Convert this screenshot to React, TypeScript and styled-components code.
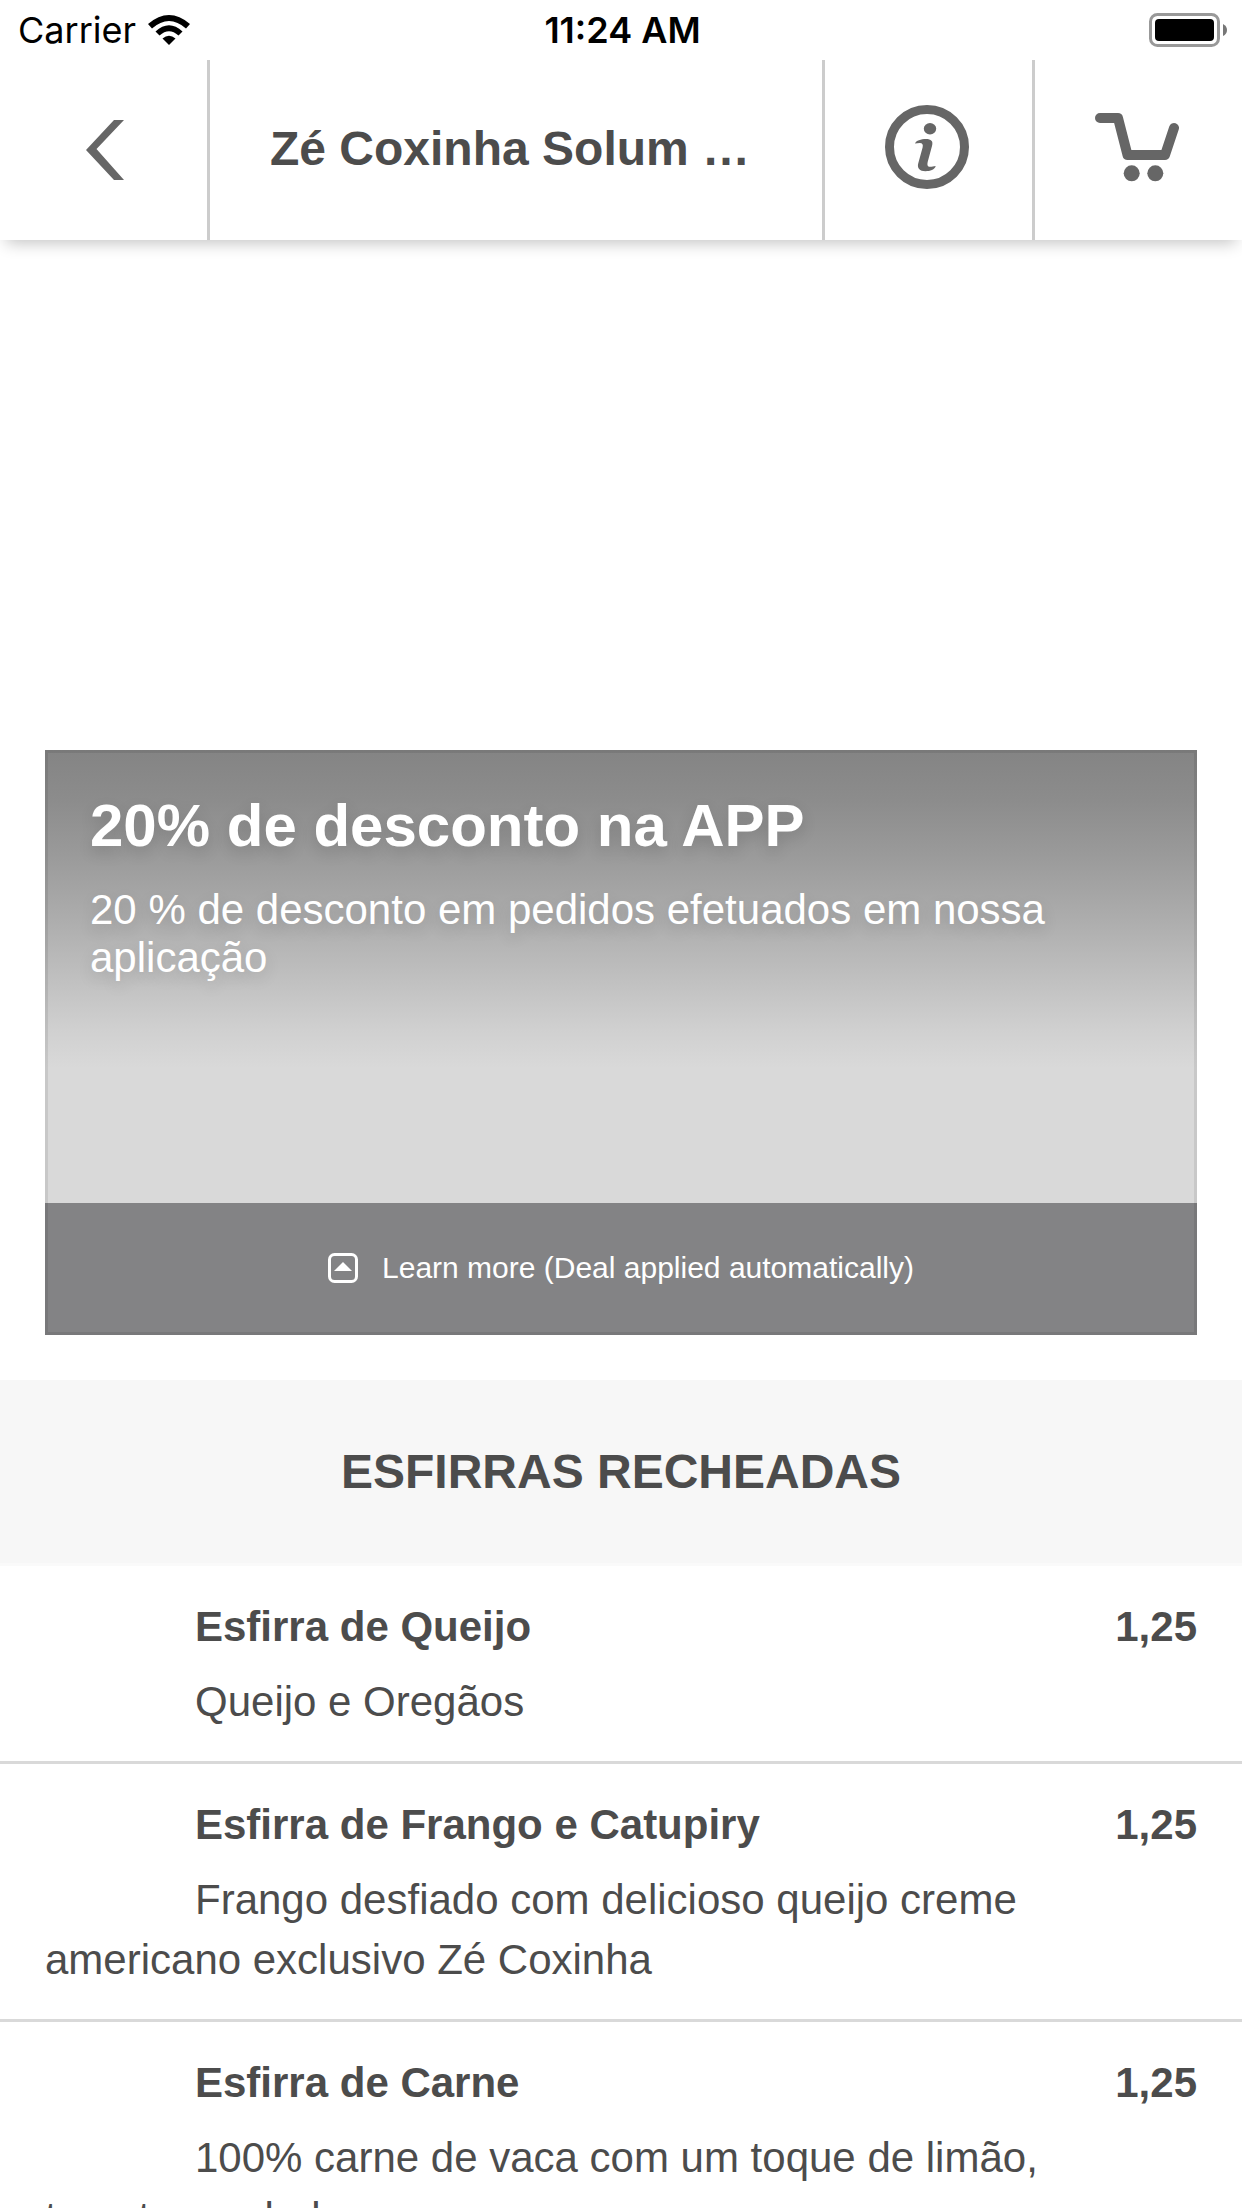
import React from "react";
import styled, { createGlobalStyle } from "styled-components";

const GlobalStyle = createGlobalStyle`
  *, *::before, *::after { box-sizing: border-box; }
  body {
    margin: 0;
    background: #fff;
    color: #4c4c4c;
    font-family: "Liberation Sans", Arial, Helvetica, sans-serif;
  }
  h1, h2, h3, p, ul { margin: 0; padding: 0; }
  button { border: 0; padding: 0; background: none; color: inherit; font: inherit; cursor: pointer; }
  svg { display: block; flex: none; }
`;

const Screen = styled.div`
  height: 100vh;
  display: flex;
  flex-direction: column;
  overflow: hidden;
  background: #fff;
`;

const TopBar = styled.header`
  flex: none;
  background: #fff;
  box-shadow: 0 9px 15px -6px rgba(0, 0, 0, 0.24);
`;

const StatusBar = styled.div`
  display: grid;
  grid-template-columns: 1fr auto 1fr;
  align-items: center;
  height: 60px;
  padding: 0 15px 0 18px;
  color: #000;
  font-family: Inter, Roboto, sans-serif;
  font-size: 36px;
  line-height: 45px;
`;

const Carrier = styled.div`
  display: flex;
  align-items: center;
  gap: 12px;
`;

const Clock = styled.time`
  font-weight: 600;
`;

const Battery = styled.div`
  justify-self: end;
`;

const NavBar = styled.nav`
  display: flex;
  height: 180px;
`;

const NavButton = styled.button<{ $divider: "left" | "right" }>`
  flex: none;
  display: flex;
  align-items: center;
  justify-content: center;
  width: 210px;
  color: #666;
  box-shadow: inset ${(p) => (p.$divider === "left" ? "3px" : "-3px")} 0 0 #ccc;
`;

const IconButton = styled(NavButton)`
  padding-bottom: 6px;
`;

const NavTitle = styled.h1`
  flex: 1;
  min-width: 0;
  padding: 0 60px;
  overflow: hidden;
  text-overflow: ellipsis;
  white-space: nowrap;
  font-size: 48px;
  line-height: 177px;
`;

const Content = styled.main`
  flex: 1;
  min-height: 0;
  overflow: hidden;
`;

const Cover = styled.div`
  height: 510px;
`;

const Deal = styled.section`
  position: relative;
  margin: 0 45px 45px;
  color: #fff;

  &::after {
    content: "";
    position: absolute;
    inset: 0;
    border: 3px solid rgba(0, 0, 0, 0.08);
    pointer-events: none;
  }
`;

const DealBody = styled.div`
  display: flex;
  flex-direction: column;
  gap: 30px;
  min-height: 453px;
  padding: 46px 45px 45px;
  background: linear-gradient(
    #848484 0,
    #8c8c8c 50px,
    #9a9a9a 105px,
    #adadad 170px,
    #bdbdbd 220px,
    #d0d0d0 280px,
    #d9d9d9 318px
  );
  text-shadow: 0 6px 15px rgba(0, 0, 0, 0.15);
`;

const DealTitle = styled.h2`
  font-size: 60px;
  line-height: 60px;
`;

const DealText = styled.p`
  font-size: 42px;
  line-height: 48px;
`;

const DealButton = styled.button`
  display: flex;
  align-items: center;
  justify-content: center;
  gap: 24px;
  width: 100%;
  height: 132px;
  padding-bottom: 2px;
  background: #838385;
  font-size: 30px;
  line-height: 36px;
`;

const SectionTitle = styled.h2`
  padding: 62px 45px 61px;
  border-bottom: 3px solid #fafafa;
  background: #f7f7f7;
  font-size: 48px;
  line-height: 60px;
  text-align: center;
  text-transform: uppercase;
`;

const Menu = styled.ul`
  list-style: none;
`;

const Item = styled.li`
  padding: 31px 45px 29px;
  border-bottom: 3px solid #d9d9d9;
`;

const Thumb = styled.div`
  float: left;
  width: 120px;
  height: 120px;
  margin-right: 30px;
`;

const ItemHead = styled.div`
  display: flex;
  justify-content: space-between;
  margin-bottom: 15px;
  font-size: 42px;
  font-weight: bold;
  line-height: 60px;
`;

const ItemName = styled.h3`
  font-size: inherit;
`;

const ItemText = styled.p`
  padding-right: 90px;
  font-size: 42px;
  line-height: 60px;
`;

const WifiIcon = () => (
  <svg width="42" height="30" viewBox="0 0 42 30" aria-hidden="true">
    <path d="M0 9Q21-9 42 9L38 13.500Q21-1.500 4 13.500Z" />
    <path d="M7.500 16.500Q21 4 34.500 16.500L30.500 20.500Q21 12 11.500 20.500Z" />
    <path d="M14.500 23.500Q21 18 27.500 23.500L21 30Z" />
  </svg>
);

const BatteryIcon = () => (
  <svg width="78" height="34" viewBox="0 0 78 34" role="img" aria-label="Battery full">
    <rect x="1.500" y="1.500" width="68" height="31" rx="7" fill="none" stroke="#999" strokeWidth="3" />
    <rect x="6" y="6" width="59" height="22" rx="4" />
    <path d="M74 11Q78 13 78 17T74 23Z" fill="#777" />
  </svg>
);

const BackIcon = () => (
  <svg width="38" height="60" viewBox="0 0 38 60" fill="currentColor" aria-hidden="true">
    <path d="M28 0H38L10.500 29L38 60H28L0 30Z" />
  </svg>
);

const InfoIcon = () => (
  <svg width="84" height="84" viewBox="0 0 84 84" fill="currentColor" aria-hidden="true">
    <circle cx="42" cy="42" r="37.500" fill="none" stroke="currentColor" strokeWidth="9" />
    <ellipse cx="45" cy="23.700" rx="6.200" ry="5.700" />
    <path d="M30 38.500C31 35.500 36 34 41 34C46 34 48.500 36 47 41L42.800 56.500C42 60 42.500 61.800 45 61.800C47 61.800 48.500 61.500 50.700 61C50 64.500 45 66.200 40.500 66.200C34.500 66.200 32 63 33.200 58.500L37.600 42.500C38.300 39.500 37.500 38 34.800 38C33 38 31.500 38.200 30 38.500Z" />
  </svg>
);

const CartIcon = () => (
  <svg width="84" height="84" viewBox="0 0 84 84" aria-hidden="true">
    <path
      d="M5 13H23L32.500 50H70L79 23"
      fill="none"
      stroke="currentColor"
      strokeWidth="10"
      strokeLinecap="round"
      strokeLinejoin="round"
    />
    <circle cx="36.700" cy="68.300" r="8" fill="currentColor" />
    <circle cx="60.300" cy="68.300" r="8" fill="currentColor" />
  </svg>
);

const ExpandIcon = () => (
  <svg width="30" height="30" viewBox="0 0 30 30" aria-hidden="true">
    <rect x="1.500" y="1.500" width="27" height="27" rx="5" fill="none" stroke="#fff" strokeWidth="3" />
    <path d="M15 9L24 18H6Z" fill="#fff" />
  </svg>
);

const items = [
  { name: "Esfirra de Queijo", price: "1,25", text: "Queijo e Oregãos" },
  {
    name: "Esfirra de Frango e Catupiry",
    price: "1,25",
    text: "Frango desfiado com delicioso queijo creme americano exclusivo Zé Coxinha",
  },
  {
    name: "Esfirra de Carne",
    price: "1,25",
    text: "100% carne de vaca com um toque de limão, tomate e cebola",
  },
];

export default function App() {
  return (
    <>
      <GlobalStyle />
      <Screen>
        <TopBar>
          <StatusBar>
            <Carrier>
              Carrier
              <WifiIcon />
            </Carrier>
            <Clock>11:24 AM</Clock>
            <Battery>
              <BatteryIcon />
            </Battery>
          </StatusBar>
          <NavBar>
            <NavButton $divider="right" aria-label="Back">
              <BackIcon />
            </NavButton>
            <NavTitle>Zé Coxinha Solum …</NavTitle>
            <IconButton $divider="left" aria-label="Information">
              <InfoIcon />
            </IconButton>
            <IconButton $divider="left" aria-label="Cart">
              <CartIcon />
            </IconButton>
          </NavBar>
        </TopBar>
        <Content>
          <Cover />
          <Deal>
            <DealBody>
              <DealTitle>20% de desconto na APP</DealTitle>
              <DealText>20 % de desconto em pedidos efetuados em nossa aplicação</DealText>
            </DealBody>
            <DealButton>
              <ExpandIcon />
              Learn more (Deal applied automatically)
            </DealButton>
          </Deal>
          <SectionTitle>Esfirras recheadas</SectionTitle>
          <Menu>
            {items.map((item) => (
              <Item key={item.name}>
                <Thumb />
                <ItemHead>
                  <ItemName>{item.name}</ItemName>
                  <span>{item.price}</span>
                </ItemHead>
                <ItemText>{item.text}</ItemText>
              </Item>
            ))}
          </Menu>
        </Content>
      </Screen>
    </>
  );
}
